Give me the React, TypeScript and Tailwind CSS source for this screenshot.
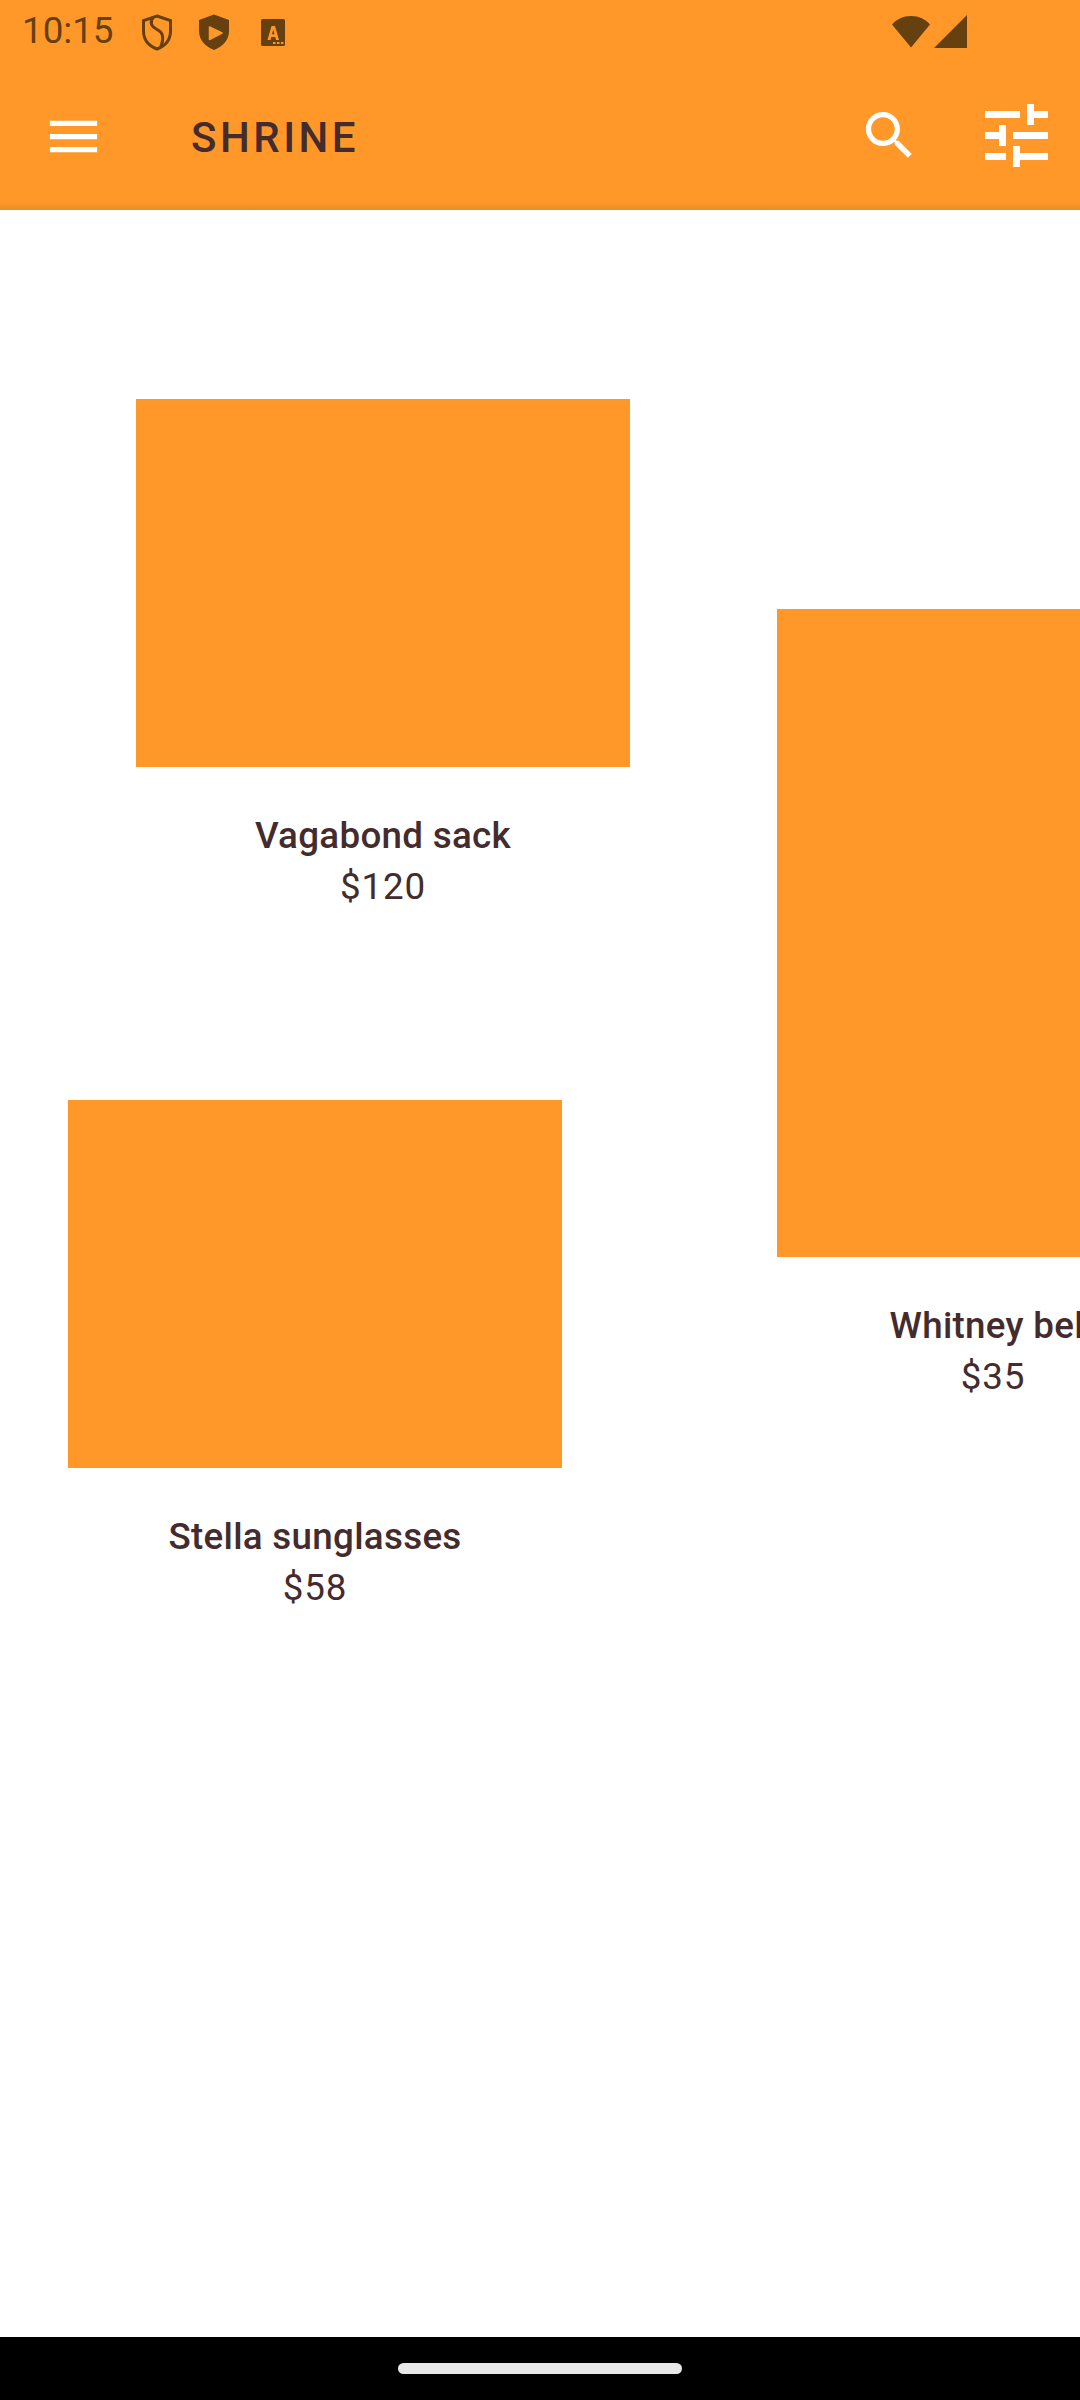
const ink = "text-[#442c2e]";

function Card({ name, price, imageClass }: { name: string; price: string; imageClass: string }) {
  return (
    <div className="flex flex-col items-center">
      <div className={`bg-[#ff9828] shrink-0 ${imageClass}`} />
      <div className={`mt-[43px] h-[51px] leading-[51px] text-[36.75px] font-[460] tracking-[0.3px] whitespace-nowrap ${ink}`}>{name}</div>
      <div className={`h-[51px] leading-[51px] text-[36.75px] font-normal tracking-[0.8px] whitespace-nowrap ${ink}`}>{price}</div>
    </div>
  );
}

function StatusIcons() {
  return (
    <>
      <svg width="32" height="37" viewBox="0 0 32 37" className="ml-[27.5px] mt-[1px]" fill="none" stroke="#66400f" strokeWidth="3">
        <path d="M16 2 L29.500 6.500 V17 C29.500 26 24 32 16 35 C8 32 2.500 26 2.500 17 V6.500 Z" />
        <path d="M12 3.500 C8 9 11 13 16 15.500 C21 18 24 22 19.500 33.500" />
      </svg>
      <svg width="32" height="37" viewBox="0 0 32 37" className="ml-[25px] mt-[1px]">
        <path d="M16 0.600 L31 6 V17 C31 26 25 32.500 16 36 C7 32.500 1 26 1 17 V6 Z" fill="#66400f" />
        <path d="M11.500 13 L24 19 L11.500 25.500 Z" fill="#ff9828" stroke="#ff9828" strokeWidth="1.500" strokeLinejoin="round" />
      </svg>
      <svg width="24" height="27" viewBox="0 0 24 27" className="ml-[31px] mt-[2px]">
        <rect x="0" y="0" width="24" height="27" rx="1.500" fill="#66400f" />
        <path d="M6.500 21 L10.500 7 H14 L18 21 H15 L14.200 18 H10.300 L9.500 21 Z M11 15.300 H13.500 L12.250 10.500 Z" fill="#ff9828" fillRule="evenodd" />
        <rect x="12" y="23" width="2.500" height="2" fill="#ff9828" />
        <rect x="16" y="23" width="2.500" height="2" fill="#ff9828" />
        <rect x="20" y="23" width="2.500" height="2" fill="#ff9828" />
      </svg>
    </>
  );
}

export default function App() {
  return (
    <div className="relative w-[1080px] h-[2400px] flex flex-col bg-white overflow-hidden font-['Roboto',sans-serif]">
      <header className="shrink-0 h-[210px] flex flex-col bg-gradient-to-b from-[#ff9828] from-[96%] to-[#ec8c22]">
        <div className="h-[63px] flex items-center pl-[22px] pr-[113px]">
          <span className="text-[36.75px] leading-none text-[#66400f]">10:15</span>
          <div className="flex items-center">
            <StatusIcons />
          </div>
          <div className="ml-auto flex items-center">
            <svg width="40" height="33" viewBox="0 0 40 33"><path d="M20 32.500 L1 9.500 C6 4 12 1 20 1 C28 1 34 4 39 9.500 Z" fill="#66400f" /></svg>
            <svg width="33" height="33" viewBox="0 0 33 33" className="ml-[3px]"><path d="M33 0 V33 H0 Z" fill="#66400f" /></svg>
          </div>
        </div>
        <div className="h-[147px] flex items-center pl-[42px] pr-[32px]">
          <svg width="63" height="63" viewBox="0 0 24 24" fill="#fff"><path d="M3 18h18v-2H3v2zm0-5h18v-2H3v2zm0-7v2h18V6H3z" /></svg>
          <span className={`ml-[86px] mt-[1px] text-[42px] font-[460] tracking-[3.5px] ${ink}`}>SHRINE</span>
          <svg width="63" height="63" viewBox="0 0 24 24" fill="#fff" className="ml-auto -mt-[2px]"><path d="M15.500 14h-.79l-.28-.27C15.410 12.590 16 11.110 16 9.500 16 5.910 13.090 3 9.500 3S3 5.910 3 9.500 5.910 16 9.500 16c1.610 0 3.090-.59 4.230-1.570l.27.28v.79l5 4.990L20.490 19l-4.990-5zm-6 0C7.010 14 5 11.990 5 9.500S7.010 5 9.500 5 14 7.010 14 9.500 11.990 14 9.500 14z" /></svg>
          <svg width="63" height="63" viewBox="3 3 18 18" fill="#fff" className="ml-[64px] -mt-[2px]"><path d="M3 17v2h6v-2H3zM3 5v2h10V5H3zm10 16v-2h8v-2h-8v-2h-2v6h2zM7 9v2H3v2h4v2h2V9H7zm14 4v-2H11v2h10zm-6-4h2V7h4V5h-4V3h-2v6z" /></svg>
        </div>
      </header>

      <main className="flex-1 flex overflow-hidden">
        <div className="w-[630px] shrink-0 flex flex-col">
          <div className="ml-[136px] mt-[189px] w-[494px]">
            <Card name="Vagabond sack" price="$120" imageClass="w-[494px] h-[368px]" />
          </div>
          <div className="ml-[68px] mt-[188px] w-[494px]">
            <Card name="Stella sunglasses" price="$58" imageClass="w-[494px] h-[368px]" />
          </div>
        </div>
        <div className="ml-[147px] mt-[399px] w-[432px] shrink-0">
          <Card name="Whitney belt" price="$35" imageClass="w-[432px] h-[648px]" />
        </div>
      </main>

      <footer className="shrink-0 h-[63px] bg-black flex justify-center pt-[26px]">
        <div className="w-[284px] h-[11px] rounded-full bg-[#e8e8e8]" />
      </footer>
    </div>
  );
}
